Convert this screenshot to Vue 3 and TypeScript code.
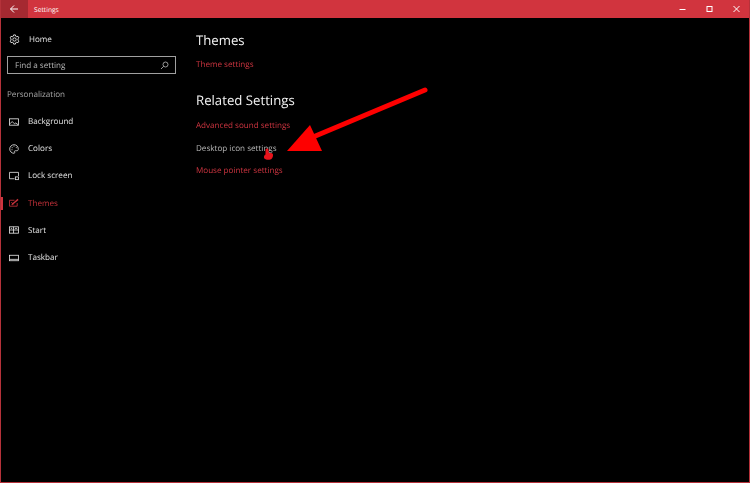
<script setup lang="ts">
interface NavItem { label: string; icon: string; active?: boolean }
const items: NavItem[] = [
  { label: 'Background', icon: 'bg' },
  { label: 'Colors', icon: 'colors' },
  { label: 'Lock screen', icon: 'lock' },
  { label: 'Themes', icon: 'themes', active: true },
  { label: 'Start', icon: 'start' },
  { label: 'Taskbar', icon: 'taskbar' },
]
</script>

<template>
  <div class="window">
    <header class="titlebar">
      <div class="back">
        <svg width="10" height="10" viewBox="0 0 10 10" fill="none" stroke="#fff" stroke-width="1"><path d="M9 5H1.500M5 1.500 1.500 5 5 8.500" /></svg>
      </div>
      <span class="title">Settings</span>
      <div class="controls">
        <svg class="ctl" width="8" height="8" viewBox="0 0 8 8"><path d="M1 4.500h6" stroke="#fff" fill="none" /></svg>
        <svg class="ctl" width="8" height="8" viewBox="0 0 8 8"><rect x="1.500" y="1.500" width="5" height="5" stroke="#fff" fill="none" /></svg>
        <svg class="ctl" width="8" height="8" viewBox="0 0 8 8"><path d="M1 1l6 6M7 1 1 7" stroke="#fff" fill="none" /></svg>
      </div>
    </header>
    <div class="body">
      <aside class="sidebar">
        <div class="home">
          <svg class="icon" width="11" height="11" viewBox="0 0 12 12" fill="none" stroke="#e6e6e6" stroke-width="1">
            <path d="M5 1h2l.3 1.400 1.200.6 1.300-.5 1 1.700-1 .9v1.800l1 .9-1 1.700-1.300-.5-1.200.6L7 11H5l-.3-1.400-1.200-.6-1.300.5-1-1.700 1-.9V5.100l-1-.9 1-1.700 1.300.5 1.200-.6z" />
            <circle cx="6" cy="6" r="1.800" />
          </svg>
          <span>Home</span>
        </div>
        <div class="search">
          <span class="search-text">Find a setting</span>
          <svg width="9" height="9" viewBox="0 0 9 9" fill="none" stroke="#bdbdbd" stroke-width="0.8"><circle cx="5.500" cy="3.500" r="2.500" /><path d="M3.700 5.300 1 8" /></svg>
        </div>
        <div class="section">Personalization</div>
        <nav class="nav">
          <div v-for="item in items" :key="item.label" class="nav-item" :class="{ active: item.active }">
            <svg class="icon" width="10" height="10" viewBox="0 0 11 11" fill="none" stroke="currentColor" stroke-width="0.9">
              <template v-if="item.icon === 'bg'">
                <rect x="0.500" y="2" width="10" height="7" />
                <path d="M1 7.500 3.500 5l2.500 2.500 1.500-1 2.500 2" />
              </template>
              <template v-else-if="item.icon === 'colors'">
                <path d="M5.500.8a4.700 4.700 0 1 0 0 9.400c.8 0 .9-.7.6-1.300-.4-.8 0-1.500 1-1.500h1.500c1 0 1.600-.6 1.600-1.700C10.200 2.700 8.100.8 5.500.800z" />
                <path d="M3 4h1M5 2.500h1M2.800 6.300h1M7.500 4h1" />
              </template>
              <template v-else-if="item.icon === 'lock'">
                <path d="M6 8.500H.5v-7h10v4" />
                <rect x="7" y="6.500" width="3.500" height="3" />
              </template>
              <template v-else-if="item.icon === 'themes'">
                <path d="M6 2.500H.5v6.500h8.500V5.500" />
                <path d="M3 7.500 10 1.500" stroke-width="1.500" />
                <path d="M2.500 4.500 5 7" />
              </template>
              <template v-else-if="item.icon === 'start'">
                <rect x="0.500" y="2" width="10" height="7" />
                <path d="M0.500 5.500h10M5 2v7M2 3.700h1.500M6.500 3.700h2.500" />
              </template>
              <template v-else>
                <rect x="0.500" y="2.500" width="10" height="6" />
                <path d="M.5 7h10" />
              </template>
            </svg>
            <span>{{ item.label }}</span>
          </div>
        </nav>
      </aside>
      <main class="content">
        <h2 class="heading">Themes</h2>
        <a class="link">Theme settings</a>
        <h2 class="heading related">Related Settings</h2>
        <div class="links">
          <a class="link">Advanced sound settings</a>
          <a class="link hover">Desktop icon settings</a>
          <a class="link">Mouse pointer settings</a>
        </div>
      </main>
    </div>
    <svg class="arrow" width="750" height="483" viewBox="0 0 750 483">
      <path d="M425 90 313 137" stroke="#fe0000" stroke-width="5" stroke-linecap="round" fill="none" />
      <path d="M287 151 310 125 322 151z" fill="#fe0000" />
      <path d="M265.500 149.500c.5-1.500 2.500-1.500 3 0l.3 3.500c1.800-.3 3.800 0 4.200 1.500.3 2.500-1 5-3.500 5.300-2.500.3-5-.3-5.500-2-.3-1.700.5-2.800 1.500-3.300z" fill="#e8141c" />
    </svg>
  </div>
</template>

<style>
html, body { margin: 0; background: #000; }
</style>

<style scoped>
.window {
  position: relative;
  width: 750px;
  height: 483px;
  box-sizing: border-box;
  background: #000;
  border-left: 1px solid #b5323a;
  border-right: 1px solid #b5323a;
  border-bottom: 1px solid #b5323a;
  font-family: "Open Sans", "Noto Sans", sans-serif;
  font-size: 8.100px;
  text-rendering: geometricPrecision;
  color: #e6e6e6;
  overflow: hidden;
}
.titlebar {
  height: 18px;
  margin: 0 -1px;
  background: #d1343e;
  display: flex;
  align-items: center;
  color: #fff;
}
.back {
  width: 28px;
  height: 18px;
  background: #a52931;
  display: flex;
  align-items: center;
  justify-content: center;
}
.title { margin-left: 6px; font-size: 6.700px; }
.controls { margin-left: auto; display: flex; align-items: center; }
.ctl { width: 27px; height: 8px; }
.body { display: flex; will-change: opacity; }
.sidebar { width: 195px; flex: none; }
.home {
  display: flex;
  align-items: center;
  gap: 9px;
  margin: 15px 0 0 8px;
  height: 13px;
}
.search {
  display: flex;
  align-items: center;
  justify-content: space-between;
  box-sizing: border-box;
  width: 169px;
  height: 18px;
  margin: 10px 0 0 6px;
  padding: 0 6px 0 7px;
  border: 1px solid #a0a0a0;
  color: #b8b8b8;
}
.search-text { padding-top: 1px; }
.section { margin: 15px 0 0 6px; color: #a8a8a8; line-height: 12px; }
.nav { margin-top: 7px; }
.nav-item {
  display: flex;
  align-items: center;
  gap: 9px;
  height: 27.200px;
  padding-left: 8px;
  position: relative;
  color: #e6e6e6;
}
.nav-item.active { color: #c8323b; }
.nav-item.active::before {
  content: "";
  position: absolute;
  left: -1px;
  top: 7px;
  width: 3px;
  height: 13px;
  background: #d1343e;
}
.content { padding-top: 13px; }
.heading { margin: 0; font-size: 13.200px; font-weight: 400; line-height: 18px; color: #f2f2f2; }
.related { margin-top: 20px; }
.link { display: block; color: #cf3540; line-height: 12px; margin-top: 10px; }
.links .link { margin-top: 0; margin-bottom: 10.500px; }
.links { margin-top: 11px; }
.link.hover { color: #b8b8b8; }
.arrow { position: absolute; left: -1px; top: 0; pointer-events: none; }
</style>
